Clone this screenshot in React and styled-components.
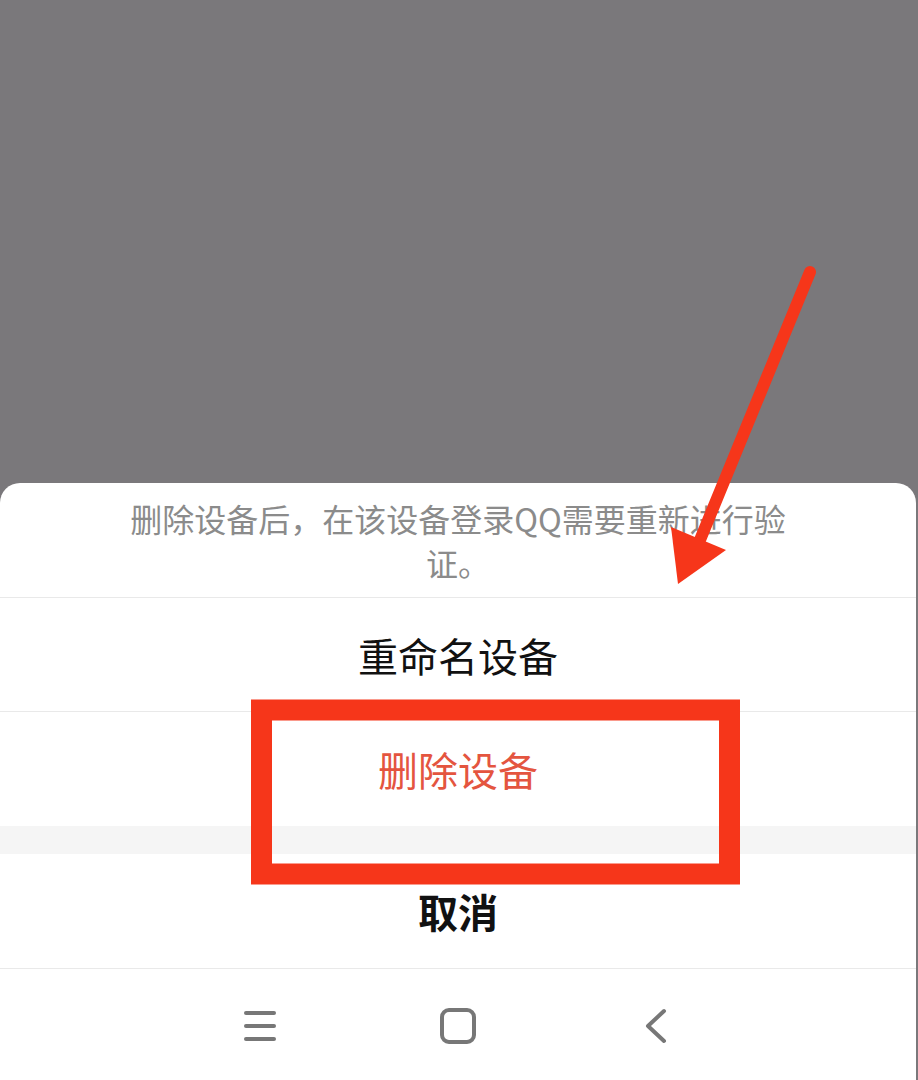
import React from "react";
import styled, { createGlobalStyle } from "styled-components";

const Global = createGlobalStyle`
  html, body { margin: 0; padding: 0; }
  body {
    width: 918px;
    height: 1080px;
    overflow: hidden;
    background: #7a787b;
    font-family: "Noto Sans CJK SC", "Noto Sans", sans-serif;
  }
`;

const Screen = styled.div`
  position: relative;
  width: 918px;
  height: 1080px;
  display: flex;
  flex-direction: column;
  background: #7a787b;
`;

const Backdrop = styled.div`
  height: 483px;
  flex: none;
`;

const Sheet = styled.div`
  flex: 1;
  display: flex;
  flex-direction: column;
  background: #ffffff;
  border-radius: 20px 20px 0 0;
  margin-right: 2px;
`;

const Message = styled.div`
  height: 115px;
  box-sizing: border-box;
  padding: 13px 120px 0;
  text-align: center;
  color: #8b8b8b;
  font-size: 32px;
  line-height: 44px;
  border-bottom: 1.5px solid #e9e9e9;
`;

const Action = styled.div`
  height: 114px;
  display: flex;
  align-items: center;
  justify-content: center;
  font-size: 40px;
  color: ${(p) => p.color || "#111"};
  font-weight: ${(p) => (p.bold ? 700 : 400)};
  border-bottom: ${(p) => (p.divider ? "1.5px solid #e9e9e9" : "none")};
  box-sizing: border-box;
`;

const Gap = styled.div`
  height: 28px;
  background: #f5f5f5;
`;

const NavBar = styled.div`
  flex: 1;
  display: flex;
  align-items: center;
  justify-content: center;
  border-top: 1.5px solid #e9e9e9;
  padding-top: 2px;
`;

const NavSlot = styled.div`
  width: 198px;
  display: flex;
  justify-content: center;
`;

const Overlay = styled.svg`
  position: absolute;
  left: 0;
  top: 0;
  pointer-events: none;
`;

export default function App() {
  return (
    <>
      <Global />
      <Screen>
        <Backdrop />
        <Sheet>
          <Message>删除设备后，在该设备登录QQ需要重新进行验证。</Message>
          <Action divider>重命名设备</Action>
          <Action color="#e4553f">删除设备</Action>
          <Gap />
          <Action bold>取消</Action>
          <NavBar>
            <NavSlot>
              <svg width="34" height="32" viewBox="0 0 34 32">
                <g stroke="#777" strokeWidth="4" strokeLinecap="round">
                  <line x1="3" y1="3" x2="31" y2="3" />
                  <line x1="3" y1="16" x2="31" y2="16" />
                  <line x1="3" y1="29" x2="31" y2="29" />
                </g>
              </svg>
            </NavSlot>
            <NavSlot>
              <svg width="36" height="36" viewBox="0 0 36 36">
                <rect x="2" y="2" width="32" height="32" rx="7" fill="none" stroke="#777" strokeWidth="4" />
              </svg>
            </NavSlot>
            <NavSlot>
              <svg width="24" height="36" viewBox="0 0 24 36">
                <polyline points="20,3 4,18 20,33" fill="none" stroke="#777" strokeWidth="4" strokeLinecap="round" strokeLinejoin="round" />
              </svg>
            </NavSlot>
          </NavBar>
        </Sheet>
        <Overlay width="918" height="1080" viewBox="0 0 918 1080">
          <rect x="261.5" y="710" width="468" height="164" fill="none" stroke="#f6361a" strokeWidth="21" />
          <line x1="810" y1="272" x2="700" y2="540" stroke="#f6361a" strokeWidth="12" strokeLinecap="round" />
          <polygon points="671,527 726,550 678,584" fill="#f6361a" />
        </Overlay>
      </Screen>
    </>
  );
}
